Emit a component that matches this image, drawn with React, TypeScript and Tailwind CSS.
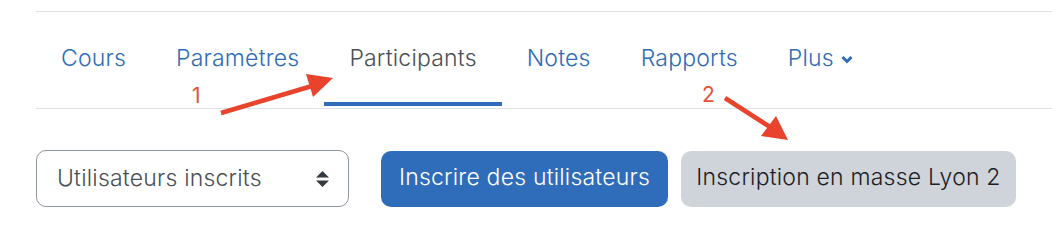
const tabs = ["Cours", "Paramètres", "Participants", "Notes", "Rapports", "Plus"];

function Annotations() {
  // red arrows drawn over the page, like a marked-up screenshot
  return (
    <svg className="pointer-events-none absolute left-0 top-0" width="1052" height="236" viewBox="0 0 1052 236">
      <g stroke="#e8432d" strokeWidth="4.5" strokeLinecap="butt" fill="#e8432d">
        <line x1="221" y1="113" x2="312" y2="86" />
        <polygon points="333,78 306,74 313,97" stroke="none" />
        <line x1="725" y1="98" x2="770" y2="127" />
        <polygon points="788,140 761,136 776,116" stroke="none" />
      </g>
      <text x="192" y="103" fill="#e8503a" fontSize="21" fontFamily="Inter, sans-serif">1</text>
      <text x="702" y="102" fill="#e8503a" fontSize="21" fontFamily="Inter, sans-serif">2</text>
    </svg>
  );
}

export default function App() {
  return (
    <div className="relative h-[236px] w-[1052px] overflow-hidden bg-white font-['Inter',sans-serif]">
      <div className="pl-9 pt-[11px]">
        <nav className="border-t border-[#dee2e6]">
          <ul className="flex border-b border-[#dee2e6] pb-[2px]">
            {tabs.map((t) => {
              const active = t === "Participants";
              return (
                <li key={t}>
                  <a
                    href="#"
                    className={
                      "flex h-[94px] items-center gap-[7px] border-b-4 px-[25px] pt-[2px] text-[23px] font-[350] tracking-[0.2px] " +
                      (active ? "border-[#2f6cba] text-[#4a4f55]" : "border-transparent text-[#2e6cb8]")
                    }
                  >
                    {t}
                    {t === "Plus" && (
                      <svg width="12" height="9" viewBox="0 0 12 9" className="mt-[2px]">
                        <polyline points="1.5,2 6,6.5 10.5,2" fill="none" stroke="#2e6cb8" strokeWidth="3" />
                      </svg>
                    )}
                  </a>
                </li>
              );
            })}
          </ul>
        </nav>

        <div className="mt-[41px] flex items-center">
          <div className="flex h-[57px] w-[313px] items-center justify-between rounded-[10px] border border-[#8f959e] pl-[20px] pr-[19px] text-[23px] font-[350] tracking-[0.2px] text-[#4a4f55]">
            <span>Utilisateurs inscrits</span>
            <svg width="13" height="16" viewBox="0 0 13 16">
              <polygon points="6.5,0 13,6.5 0,6.5" fill="#343a40" />
              <polygon points="0,9.5 13,9.5 6.5,16" fill="#343a40" />
            </svg>
          </div>
          <button className="ml-8 flex h-[56px] w-[287px] items-center justify-center rounded-[10px] bg-[#2f6cba] pb-[2px] text-[23px] font-[350] tracking-[0.2px] text-white">
            Inscrire des utilisateurs
          </button>
          <button className="ml-[13px] flex h-[56px] w-[335px] items-center justify-center rounded-[10px] bg-[#ced4da] pb-[2px] text-[23px] font-[350] tracking-[0.2px] text-[#1d2125]">
            Inscription en masse Lyon 2
          </button>
        </div>
      </div>
      <Annotations />
    </div>
  );
}
